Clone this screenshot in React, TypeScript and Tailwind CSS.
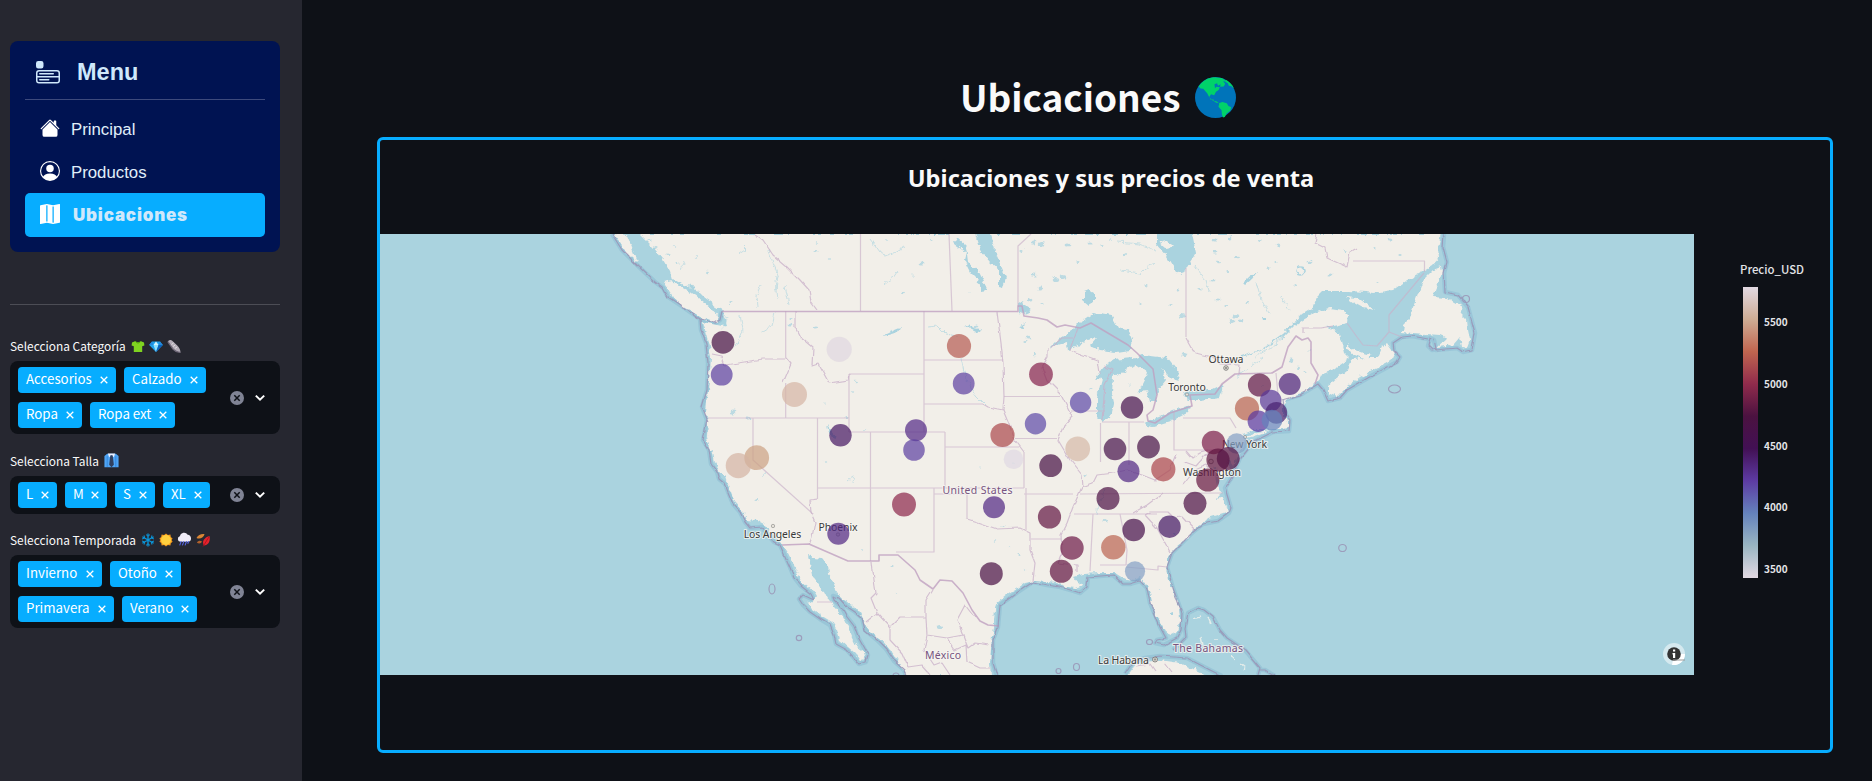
import React from "react";
import { BsHouseFill, BsMapFill, BsMenuAppFill, BsPersonCircle } from "react-icons/bs";

const SANS = "font-['Noto_Sans_CJK_SC',sans-serif]";
const ARIAL = "font-['Liberation_Sans',sans-serif]";

/* ---------- small pictograms ---------- */

const Shirt = () => (
  <svg viewBox="0 0 14 14" className="size-[14px]">
    <path d="M4.500 2 1 3.600.6 6.600l2.200.6V13h8.400V7.200l2.200-.6-.4-3L9.500 2C9 3.800 5 3.800 4.500 2z" fill="#7fd321" />
    <path d="M4.500 2c.5 2.600 4.500 2.600 5 0" fill="none" stroke="#4ea30d" strokeWidth="1" />
  </svg>
);
const Gem = () => (
  <svg viewBox="0 0 14 14" className="size-[14px]">
    <path d="M3 2.500h8L13.800 6 7 13 .2 6z" fill="#1fa2ee" />
    <path d="M3 2.500 4.500 6H.2zM11 2.500 9.500 6h4.300z" fill="#2388dd" />
    <path d="M4.500 6h5L7 13z" fill="#8fe0ff" />
    <path d="M7 2.500 4.500 6h5z" fill="#d5f5ff" />
    <path d="M9.500 6h4.300L7 13z" fill="#0b62bd" />
  </svg>
);
const Shoe = () => (
  <svg viewBox="0 0 14 14" className="size-[14px]">
    <path d="M.8 2.600C2 1 4 .6 5.200 1.800L10 6.200c2 1.800 3.400 4.200 3.500 7.200-2.500-.2-5.500-1.200-7.400-3.400z" fill="#b4adb8" />
    <path d="M.8 2.600 6 10c2 2.400 5 3.300 7.500 3.400" fill="none" stroke="#6f6878" strokeWidth="1.300" />
    <path d="m4.500 5.500 2-1.500M6 7.500 8.200 6M8 9.400 10 8" stroke="#eee" strokeWidth=".8" />
  </svg>
);
const Tie = () => (
  <svg viewBox="0 0 14 14" className="size-[15px]">
    <path d="M3 .8h8l2.600 2V13.200H.4V2.800z" fill="#4fa4f4" />
    <path d="M3 3v10M11 3v10" stroke="#2b7cd3" strokeWidth=".7" />
    <path d="M3.600.5h6.800L9.200 4 7 2.200 4.800 4z" fill="#e8efff" />
    <path d="M6 2.200h2l.3 1.500L9.200 11 7 13.300 4.800 11l.9-7.300z" fill="#30405f" />
  </svg>
);
const Snow = () => (
  <svg viewBox="0 0 14 14" className="size-[14px]">
    <g stroke="#0b96da" strokeWidth="1.300" fill="none">
      <path d="M7 .5v13M1.400 3.700l11.200 6.600M12.600 3.700 1.400 10.300" />
      <path d="m5 1.600 2 1.600 2-1.600M5 12.400l2-1.600 2 1.600M1 6l2.600-1-.5-2.600M13 6l-2.600-1 .5-2.600M1 8l2.600 1-.5 2.600M13 8l-2.600 1 .5 2.600" strokeWidth="1" />
    </g>
  </svg>
);
const Sun = () => (
  <svg viewBox="0 0 14 14" className="size-[14px]">
    <path d="M7 .4 8.900 2l2.500-.4.400 2.400 1.800 1.600L12.600 7l1 1.700-1.800 1.500-.4 2.300-2.500-.4L7 13.600 5.100 12l-2.500.5-.4-2.400L.4 8.500 1.400 7l-1-1.600L2.200 4l.4-2.400L5.100 2z" fill="#f59b1c" />
    <circle cx="7" cy="7" r="5" fill="#ffcf3f" />
  </svg>
);
const Rain = () => (
  <svg viewBox="0 0 14 14" className="size-[15px]">
    <path d="M3 9.200A2.700 2.700 0 0 1 2.600 4 4 4 0 0 1 10 2.600a3.400 3.400 0 0 1 .8 6.600z" fill="#f1edf8" />
    <path d="m4 8.500-1.500 4M6.500 8.500 5 12.500M9 8.500l-1.500 4M11 8.500l-1 2.500" stroke="#5566e8" strokeWidth="1" />
  </svg>
);
const Leaves = () => (
  <svg viewBox="0 0 14 14" className="size-[14px]">
    <path d="M.5 5C2 1.500 5.500.5 8.500 1 8 4.500 4 6.500.5 5z" fill="#d98535" />
    <path d="M.8 9.500C2.400 7.500 4.500 7.500 6 8.600 5 11 2.500 11 .8 9.500z" fill="#b3622c" />
    <path d="M13.500 3c1 4.500-.6 9-5.500 9.600C5.500 9 8 4.500 13.500 3z" fill="#e4232c" />
    <path d="M13 3.800 7 13.600" stroke="#a60f1c" strokeWidth=".8" />
  </svg>
);
const Globe = () => (
  <svg viewBox="0 0 40 40" className="size-[41px]">
    <circle cx="20" cy="20" r="20" fill="#0074ba" />
    <path d="M3.500 9.300C7 4 12 .9 18 .2l8 .7 4 2.400-2.500 1.200 2 2.200-1.500 2.500-3.500.4-1.500 3-2.500 1.800-1.800 3.300-3-.8-1.800 2.400 1.500 3 2.700-.3.800 2 2 1.200 3 .2 2.700-1 4.400 1.200 1.600 2.700 2.700 1.200-1 3.500-3.500 2.600-1.700 3.400-1.800.5-1-2.600-.4-4.400-3-3.500.8-3.200-2.500-1.800-4-1-3.300-3.200-2-4L8 11.400l-2.500-.2z" fill="#00d26a" />
    <path d="M30.500 2.900c3.500 2 6 4.700 7.500 8.200l-2.500-2-2.500-.5-1-2.500-3.500-2z" fill="#00d26a" />
    <path d="m19 7 2.500-1 1 2.500 2.500-1.500-.5 3-3.500-.5-1.500 1.500z" fill="#0074ba" />
  </svg>
);

/* ---------- sidebar ---------- */

const NAV = [
  { label: "Principal", Icon: BsHouseFill, active: false },
  { label: "Productos", Icon: BsPersonCircle, active: false },
  { label: "Ubicaciones", Icon: BsMapFill, active: true },
];

function Menu() {
  return (
    <nav className={`h-[211px] rounded-lg bg-[#001352] px-[15px] text-[#cfe8fb] ${ARIAL}`}>
      <div className="flex h-[59px] items-center border-b border-[#3d4a7c] pt-[5px] pl-[11px]">
        <BsMenuAppFill className="size-6" />
        <span className="ml-[17px] text-[23.500px] leading-none font-bold">Menu</span>
      </div>
      <ul className="pt-[7px]">
        {NAV.map(({ label, Icon, active }) => (
          <li
            key={label}
            className={
              active
                ? "flex h-[44px] items-center rounded-[5px] bg-[#07adff] pl-[15px]"
                : "flex h-[43px] items-center pl-[15px]"
            }
          >
            <Icon className="size-5 -translate-y-px text-white" />
            <span
              className={
                active
                  ? "ml-[13px] translate-y-px font-['Inter',sans-serif] text-[17px] tracking-[0.800px] font-black"
                  : "ml-[11px] translate-y-px text-[16.800px] text-[#e0effa]"
              }
            >
              {label}
            </span>
          </li>
        ))}
      </ul>
    </nav>
  );
}

function Tag({ label, width }: { label: string; width: string }) {
  return (
    <span className={`flex h-[26.500px] items-center justify-between rounded bg-[#07adff] pr-[8px] pl-[8px] text-white ${width}`}>
      <span className="-translate-y-px text-[13.300px] leading-none whitespace-nowrap">{label}</span>
      <svg viewBox="0 0 8 8" className="size-[8px]">
        <path d="M.7.7l6.600 6.600M7.300.7.7 7.300" stroke="white" strokeWidth="1.300" />
      </svg>
    </span>
  );
}

type TagSpec = [string, string];

function MultiSelect({ label, icons, rows, height }: { label: string; icons: React.ReactNode; rows: TagSpec[][]; height: string }) {
  return (
    <div>
      <div className="flex h-[29px] items-center gap-[4px] pb-[2px] text-[11.900px] text-[#fafafa]">
        <span className="mr-[1px] whitespace-nowrap">{label}</span>
        {icons}
      </div>
      <div className={`flex items-center rounded-lg bg-[#0e1117] pl-2 ${height}`}>
        <div className="flex flex-1 flex-col gap-[8.500px]">
          {rows.map((row, i) => (
            <div key={i} className="flex gap-[8px]">
              {row.map(([t, w]) => (
                <Tag key={t} label={t} width={w} />
              ))}
            </div>
          ))}
        </div>
        <svg viewBox="0 0 14 14" className="mr-[10px] size-[14px]">
          <circle cx="7" cy="7" r="7" fill="#808495" />
          <path d="m4.300 4.300 5.400 5.400M9.700 4.300 4.300 9.700" stroke="#0e1117" strokeWidth="1.500" />
        </svg>
        <svg viewBox="0 0 12 12" className="mr-[14px] size-[12px]">
          <path d="m1.800 3.600 4.200 4 4.200-4" fill="none" stroke="white" strokeWidth="2" />
        </svg>
      </div>
    </div>
  );
}

function Sidebar() {
  return (
    <aside className={`h-full w-[302px] shrink-0 bg-[#262730] pt-[41px] pr-[22px] pl-[10px] ${SANS}`}>
      <Menu />
      <hr className="mt-[52px] mb-[27px] border-[#4c4d55]" />
      <MultiSelect
        label="Selecciona Categoría"
        icons={<><Shirt /><Gem /><Shoe /></>}
        height="h-[73px]"
        rows={[[["Accesorios", "w-[98px]"], ["Calzado", "w-[82px]"]], [["Ropa", "w-[64px]"], ["Ropa ext", "w-[85px]"]]]}
      />
      <div className="h-[13px]" />
      <MultiSelect
        label="Selecciona Talla"
        icons={<Tie />}
        height="h-[38px]"
        rows={[[["L", "w-[39px]"], ["M", "w-[42px]"], ["S", "w-[40px]"], ["XL", "w-[47px]"]]]}
      />
      <div className="h-[12px]" />
      <MultiSelect
        label="Selecciona Temporada"
        icons={<><Snow /><Sun /><Rain /><Leaves /></>}
        height="h-[73px]"
        rows={[[["Invierno", "w-[84px]"], ["Otoño", "w-[71px]"]], [["Primavera", "w-[96px]"], ["Verano", "w-[75px]"]]]}
      />
    </aside>
  );
}

/* ---------- map ---------- */

const MAINLAND =
  "M640 234 653 247 662 258 670 272 672 279 683 285 697 290 707 300 718 309 723 313 727 325 722 326 712 324 703 322 705 330 708 342 711 357 710 373 708 390 706 403 705 412 708 422 707 437 710 448 712 452 714 462 720 472 725 477 727 483 731 492 735 502 742 510 747 520 757 521 765 525 770 532 777 537 782 545 787 552 792 562 797 573 803 583 812 590 816 597 813 602 807 604 813 610 822 616 832 622 837 630 840 640 848 647 855 653 860 661 865 658 864 652 857 647 852 637 847 625 842 615 835 607 828 600 823 590 818 583 812 575 810 565 808 555 814 557 822 558 828 565 829 573 833 583 837 592 843 600 853 605 860 613 865 622 870 632 882 640 890 650 898 662 906 676 L991 676 990 663 991 650 992 637 994 628 994 620 995 610 998 602 1007 595 1017 589 1025 583 1035 581 1047 582 1057 583 1067 587 1075 588 1083 585 1077 582 1073 577 1083 574 1100 573 1115 573 1123 578 1133 580 1140 577 1145 583 1150 592 1152 602 1155 613 1160 623 1165 632 1172 635 1178 632 1180 620 1179 608 1175 598 1170 583 1167 573 1166 565 1169 555 1177 547 1187 539 1193 530 1202 525 1208 518 1218 515 1227 512 1225 503 1221 498 1216 499 1222 493 1218 486 1216 475 1213 466 1217 468 1221 480 1227 477 1230 469 1226 458 1230 460 1234 466 1238 457 1242 448 1245 438 1244 434 1253 430 1263 430 1273 429 1283 429 1289 427 1287 418 1283 417 1283 407 1286 400 1295 395 1305 392 1313 386 1320 379 1323 374 1333 370 1343 363 1350 358 1345 353 1343 345 1340 333 1333 330 1326 327 1334 326 1347 323 1348 315 1343 310 1330 308 1317 312 1303 320 1293 327 1286 334 1278 343 1287 330 1295 322 1303 313 1313 307 1317 297 1323 291 1347 291 1367 292 1373 293 1393 290 1403 283 1413 277 1425 270 1433 265 1439 258 1438 247 1441 234Z";

const ISLANDS = [
  "M663 282 672 280 687 288 700 297 713 308 719 315 717 323 703 318 683 307 672 295Z",
  "M615 234 627 235 632 248 637 262 628 255 620 243Z",
  "M1352 359 1367 358 1377 358 1382 347 1387 343 1392 350 1395 357 1387 363 1373 370 1360 377 1347 387 1337 397 1328 393 1328 385 1337 378 1347 370Z",
  "M1347 343 1352 349 1363 353 1371 355 1367 360 1355 355 1347 350Z",
  "M1346 297 1358 298 1375 310 1363 308 1354 303Z",
  "M1441 267 1442 273 1433 297 1447 298 1463 307 1460 313 1467 320 1468 330 1470 340 1467 348 1462 347 1460 337 1453 345 1437 347 1447 338 1440 335 1413 333 1402 332 1403 325 1408 320 1417 297 1423 280 1433 270Z",
  "M1127 676 1135 665 1146 662 1160 660 1180 663 1200 672 1207 676Z",
  "M1246 436 1257 432 1270 430 1258 435 1247 438Z",
];

const LAKES = [
  "M1050 348 1060 338 1073 330 1083 320 1093 313 1112 316 1118 327 1128 329 1132 340 1130 350 1117 352 1100 350 1090 345 1097 337 1087 340 1075 347 1068 351 1067 343Z",
  "M1095 380 1103 367 1113 360 1133 358 1138 362 1130 367 1122 373 1113 377 1112 393 1114 403 1111 417 1102 423 1097 417 1097 397 1102 378 1096 381Z",
  "M1130 360 1143 355 1167 358 1175 368 1180 380 1170 377 1161 368 1166 380 1158 390 1157 402 1150 402 1147 389 1138 394 1145 380 1147 372 1138 366Z",
  "M1144 422 1160 417 1173 410 1191 405 1187 413 1170 422 1153 427 1147 426Z",
  "M1182 395 1190 390 1213 390 1223 385 1220 397 1200 400 1188 400Z",
  "M1157 234 1192 234 1196 253 1188 265 1182 275 1175 270 1167 257 1157 245Z",
  "M975 234 990 234 997 257 1006 277 1003 288 999 287 999 270 990 262 980 250Z",
  "M957 238 966 246 968 262 978 270 983 280 988 291 982 292 978 280 970 272 964 260 966 252 954 243Z",
  "M1084 292 1089 290 1094 293 1094 302 1089 305 1084 301Z",
  "M1018 304 1024 300 1026 307 1031 310 1024 313 1018 312Z",
  "M1018 328 1025 324 1022 329Z",
  "M827 424 832 430 837 436 834 438 829 433Z",
  "M882 336 890 332 900 328 898 332 888 335Z",
  "M1243 283 1250 276 1257 272 1252 279 1245 285Z",
  "M1262 317 1267 317 1267 320 1263 320Z",
  "M1170 613 1173 612 1173 616 1170 616Z",
  "M964 324 972 327 982 331 978 333 970 329Z",
];

const MARITIME = [
  "M612 234 622 250 637 265 655 282 663 288 668 297 680 305 700 319 715 323 720 320 722 311",
  "M700 319 701 330 706 343 708 363 707 390 702 407 707 420 703 440 709 450 711 464 717 472 719 479 725 484 728 492 733 504 740 512 745 522 750 528 762 527 767 534 774 542 780 545 784 554 789 565 794 577 801 586 811 594 814 600 803 595 799 599 803 605 810 612 820 619 830 625 834 635 836 644 847 650 854 658 859 664 866 662 868 655 863 646 858 637 854 626 847 617 842 608 834 600 833 596 839 598 846 606 855 612 862 618 865 630 877 640 886 649 894 661 904 670 906 676",
  "M1444 234 1443 247 1447 262 1444 273 1445 292 1458 295 1468 307 1475 333 1472 350 1463 352 1457 348 1436 350 1434 340 1430 338 1428 346 1432 350 1437 349 M1428 339 1412 336 1402 337 1393 343 1394 351 1400 357 1397 362 1373 375 1347 390 1340 398 1328 401 1323 390 1318 384 1300 395 1283 400 1285 413 1290 420 1289 431 1273 432 1253 442 1240 458 1232 477 1225 488 1231 508 1229 513 1218 521 1203 524 1193 532 1172 553 1167 567 1173 588 1182 613 1181 630 1177 638 1164 645 1155 643 1157 640 1166 638 1160 627 1150 603 1147 588 1140 581 1130 584 1123 584 1113 575 1088 577 1087 587 1080 593 1074 591 1060 587 1047 585 1033 582 1018 592 1000 605 998 627 993 640 993 663 997 676",
  "M1125 674 1133 662 1145 658 1160 656 1187 658 1210 670 1222 676",
  "M1173 650 1186 637 1185 628 1188 613 1198 608 1204 610 1213 617 1220 630 1227 638 1245 650 1260 668 1258 675",
  "M1260 670 1265 670 1275 676",
];

const BORDER = [
  "M722 311.500H1018V306L1022 306 1024 316 1038 318 1047 320 1057 327 1065 325 1080 328 1091 323 1128 345 1137 353 1153 369 1157 395 1153 410 1147 415 1148 421 1155 423 1170 413 1192 406 1190 395 1215 394 1222 384 1235 374 1272 373 1282 367 1288 347 1296 336 1302 340 1308 338 1311 342 1311 363 1318 375 1315 384",
  "M782 545 809 544 848 561H879V555H898L915 570 920 580 933 589 940 580 952 581 963 593 972 610 980 621 988 625 999 626",
];

const STATES_STRAIGHT =
  "M860.500 234V311 M785.700 311V358 M785.700 383V418 M849 374H924 M849 374V432 M708 418H849 M849 432H945 M753 418V460L812 513 M817.500 418V499 M870.500 432V561 M817 488H1024 M945 432V488 M934 488V552H896 M934 494H967V519 M1024 452V488 M1026 488V530 M1031 539H1061 M1024 494H1073 M1074 514H1157 M1080 494 1223 493 M1093 514 1090 571 M1120 514 1127 550 1126 565H1100 M1126 567 1158 570 1158 566 1167 567 M949 234 952 311 M1031 234 1018 246V306 M924 311V432 M924 360H1003 M924 404H983 M1004 396.500H1060 M945 447H1019 M1015 438.500H1057 M1071 411H1105 M1100.500 423V462 M1129 422V465 M1102 422H1144 M1174 412V450H1213 M1183 418H1230L1236 428 M1186 268V337 M1353 261H1424.500V272 M1424 273 1389 315V332L1402 337 M817 602H832 M1276 373 1278 395 M1347 323 1357 337 1363 345 1377 346 1389 332";

const STATES_ROUGH =
  "M755 234 763 240 773 255 787 267 800 280 809 290 811 302 817 310 M712 355 722 357 725 365 738 363 763 359 786 359 M786 358 791 364 783 383 M795 311V327L800 337 813 348 812 365 818 363 829 383 848 380 849 374 M817 499 810 500 811 513 815 522 812 537 809 545 M967 519 977 522 997 529 1020 528 1030 533V550L1035 563 1033 581 M1082 487 1073 507 1067 523 1061 535 1062 553 1058 563 1077 565V572 M1145 515 1157 528 1170 552 M1145 515 1150 512 1168 512 1173 517 1182 516 1195 530 M1133 513 1147 505 1163 493 M1082 487 1093 483 1097 475 1113 473 1127 470 1142 475 1155 480 1170 470 1176 455 M997 312 1001 343 1003 363 1004 397 1003 410 1010 427 1015 440 1024 452 M983 404 988 407 1003 410 M1048 348V357L1042 367 1047 380 1060 393 1072 417 1063 427 1058 440 1070 460 1082 475 1083 487 M1050 348 1062 338 1073 338 M1070 350 1097 360 1099 373 M1070 350 1078 328 M1102 420 1105 385 1112 370 1104 366 M1186 337 1195 353 1213 357 1220 364 1240 365 1239 373 M1317 234 1315 243 1325 248 1327 258 1347 267 1350 252 1357 248 M1303 333 1303 328 1320 328 1333 326 M872 561 874 580 876 593 871 598 877 613 890 627 900 617 926 617 926 600 933 589 M890 627V640L902 653 908 667 M877 613 866 622 M926 617 927 635 947 638 963 635 957 620 965 605 975 618 M947 638 955 650 966 645 967 662 980 668 990 668 M963 635 968 648 975 643 990 645 M927 635 924 650 934 665 942 662 950 674 M908 667 922 665 930 674 M1213 450 1205 456 1196 466 1185 462 M1183 485 1195 470 1207 465 1216 475 M1136 666 1150 664 1155 671 M1165 663 1172 672 M1186 451 1192 458 1200 453 1212 450";

const RIVERS =
  "M928 327 938 326 946 334 958 336M961 358 964 372 969 385 976 397 985 406M740 314 743 330 736 346M775 313 772 325 762 331M848 481 854 476 852 483M740 254 746 250 742 246M758 308 757 295 761 285M775 280 777 300M785 285 789 305M885 284 893 278 897 272M1118 242 1140 244 1155 250M1120 271 1140 274 1155 262M1194 265 1206 280 1209 292M1255 357 1275 345 1284 335M1263 357 1245 371 1236 377M1257 282 1262 300 1270 315M1280 296 1290 310M870 238 880 252 890 256 905 247M768 250 778 275 776 290M1096 515 1100 500 1105 488M722 330 728 318 722 314M660 262 664 258M680 270 684 262M688 284 693 292 700 290";

const SPECKS: [number, number, number][] = [
  [649, 240, 2], [656, 248, 2], [668, 254, 2], [678, 262, 2], [675, 246, 1.500], [697, 257, 1.500], [708, 272, 2.500], [731, 303, 2],
  [790, 325, 3], [816, 328, 3], [791, 318, 2], [733, 412, 3], [748, 418, 3], [816, 252, 2], [830, 259, 1.500], [817, 243, 1.500],
  [903, 293, 2.500], [922, 263, 3], [1033, 242, 3], [1041, 244, 4], [1067, 245, 3], [1090, 243, 3], [1103, 245, 2], [1056, 280, 4],
  [1063, 277, 4], [1040, 288, 3], [1034, 275, 3], [1022, 250, 2], [1078, 262, 2], [1124, 255, 2.500], [1030, 300, 3], [1042, 303, 2],
  [1028, 338, 3], [1025, 342, 2], [1034, 355, 2.500], [1090, 388, 2], [1182, 316, 4], [1184, 354, 4], [1178, 290, 3], [1170, 305, 2],
  [1200, 290, 2], [1212, 281, 3], [1216, 252, 3], [1215, 240, 3], [1218, 262, 2.500], [1230, 238, 3], [1237, 258, 2.500], [1228, 272, 2],
  [1236, 316, 4], [1231, 321, 4], [1241, 321, 3], [1218, 300, 3], [1226, 306, 2], [1248, 302, 2], [1268, 268, 2], [1278, 245, 3],
  [1276, 262, 2], [1260, 240, 2], [1296, 285, 2], [1310, 262, 3], [1330, 275, 3], [1345, 250, 2], [1375, 248, 2], [1390, 240, 3],
  [1400, 255, 2], [1377, 283, 2], [1292, 360, 3], [1298, 368, 2.500], [1305, 372, 2], [1310, 350, 2], [1262, 385, 1.500], [977, 327, 3],
  [824, 403, 1], [856, 382, 2.500], [853, 392, 1.500], [846, 418, 2], [865, 430, 1.500], [757, 500, 2], [764, 474, 1.500], [826, 461, 1.500],
  [862, 550, 1.500], [893, 565, 2], [940, 627, 4], [896, 595, 1.500], [1003, 527, 2], [1010, 547, 1.500], [1020, 555, 2], [1025, 570, 1.500],
  [995, 541, 1.500], [1045, 475, 1.500], [1105, 520, 2], [1085, 475, 2], [1100, 505, 2], [1175, 535, 2], [1160, 590, 1.500], [970, 292, 1],
  [932, 241, 2], [912, 275, 1], [888, 240, 1.500], [1013, 464, 1], [1130, 385, 1], [980, 468, 1], [1110, 240, 1.500], [1145, 285, 2], [1140, 302, 2],
];

const MAP_LABELS: [string, number, number, number, boolean][] = [
  ["Ottawa", 1226, 362.500, 35, false],
  ["Toronto", 1187, 391, 37.500, false],
  ["New York", 1244.500, 448, 45, false],
  ["Washington", 1212, 476, 58, false],
  ["Los Angeles", 772.500, 538, 57.500, false],
  ["Phoenix", 838, 531, 39, false],
  ["La Habana", 1123.500, 663.500, 51, false],
  ["United States", 977.500, 494, 70, true],
  ["México", 943, 659, 36, true],
  ["The Bahamas", 1208, 652, 70, true],
];

const POINTS: [number, number, number, string][] = [
  [723, 342.300, 11.400, "#440e42"], [721.700, 374.700, 10.900, "#5b3e9f"], [839.200, 349.300, 12.600, "#e0d7df"], [794.500, 394.500, 12.500, "#d6b5a4"],
  [840.500, 435.300, 11.200, "#441561"], [959, 346, 12.100, "#b55a50"], [963.700, 383.500, 10.900, "#5d3fa0"], [1041, 374.300, 11.900, "#85214c"],
  [1080.600, 402.500, 10.700, "#5d48a6"], [1132, 407.500, 11.200, "#440f4c"], [916, 430.300, 11, "#512785"], [914, 450, 10.800, "#5b3e9f"],
  [1002.500, 435, 12.100, "#ab474a"], [1035.500, 423.800, 10.700, "#5d48a6"], [1077.700, 448.800, 12.400, "#d6b9a6"], [1115, 449, 11.300, "#440f48"],
  [1148.500, 447, 11.400, "#461045"], [1213.500, 442.500, 11.700, "#7a1c49"], [1259.500, 385, 11.600, "#5e1444"], [1289.700, 384, 11, "#4a1f78"],
  [1247, 408.500, 12.100, "#b8624f"], [1270.700, 400.500, 10.800, "#583799"], [1276.300, 412.800, 10.900, "#47206f"], [1258.300, 421.300, 10.700, "#5936a0"],
  [1272, 420.200, 10.400, "#6584bd"], [1236.700, 443.500, 10.200, "#83a0c5"], [756.700, 457.700, 12.400, "#cca181"], [738.300, 465.700, 12.600, "#d4b3a3"],
  [904, 504.500, 12, "#8b2548"], [838.300, 533.700, 11, "#502581"], [1013.500, 459.300, 9.800, "#e0d9e2"], [1050.700, 465.700, 11.400, "#440e42"],
  [1128.500, 471.200, 11, "#502581"], [1163.300, 469.300, 12.100, "#ab444a"], [1108, 498.500, 11.500, "#4b1043"], [994, 507.300, 11, "#502581"],
  [1049.500, 517, 11.600, "#611440"], [1195, 503.300, 11.500, "#4b1043"], [1207.800, 480, 11.600, "#65163f"], [1218, 460, 11.600, "#5d123f"],
  [1228.200, 458.500, 11.400, "#521041"], [1133.700, 530, 11.300, "#440e48"], [1169.500, 526.700, 11.200, "#421562"], [1072, 548, 11.700, "#6c1846"],
  [1113.300, 547.300, 12.200, "#ba6450"], [1061.300, 571.300, 11.500, "#611440"], [1135, 571.300, 10.100, "#83a0c5"], [991.300, 573.700, 11.500, "#480f43"],
];

const ISLETS: [number, number, number, number][] = [
  [1466, 299, 3.500, 3.500], [1342.500, 548, 3.800, 3.500], [1394.500, 389, 6, 4], [772, 589, 3, 5], [799, 638, 2.700, 2.700],
  [1149.500, 642, 3, 2.500], [1076.500, 667, 3, 3.500], [1058.500, 671, 2.500, 2.500], [896, 676, 3, 3],
];

function PriceMap() {
  return (
    <svg viewBox="380 234 1314 441" className="h-[441px] w-[1314px] shrink-0 bg-[#aad3df]">
      <defs>
        <filter id="rough" x="380" y="220" width="1314" height="470" filterUnits="userSpaceOnUse">
          <feTurbulence type="fractalNoise" baseFrequency="0.16" numOctaves="3" seed="7" />
          <feDisplacementMap in="SourceGraphic" scale="6" xChannelSelector="R" yChannelSelector="G" />
        </filter>
        <filter id="wobble" x="380" y="220" width="1314" height="470" filterUnits="userSpaceOnUse">
          <feTurbulence type="fractalNoise" baseFrequency="0.1" numOctaves="2" seed="3" />
          <feDisplacementMap in="SourceGraphic" scale="4" xChannelSelector="R" yChannelSelector="G" />
        </filter>
      </defs>
      <g fill="none" stroke="#93c1d5" strokeWidth="4.500" strokeLinejoin="round" opacity=".7">
        {MARITIME.map((d) => <path key={d} d={d} />)}
      </g>
      <g filter="url(#rough)">
        <path d={MAINLAND} fill="#f2efe9" />
        {ISLANDS.map((d) => <path key={d} d={d} fill="#f2efe9" />)}
        <g fill="#aad3df">
          {LAKES.map((d) => <path key={d} d={d} />)}
          {SPECKS.map(([x, y, r]) => <ellipse key={`${x}-${y}`} cx={x} cy={y} rx={r * 0.8} ry={r * 0.5} opacity=".75" />)}
        </g>
        <path d="M1159 242 1166 240 1173 247 1166 248Z" fill="#f2efe9" />
        <path d={RIVERS} fill="none" stroke="#aad3df" strokeWidth="1" opacity=".6" />
        <path d="M672 280 687 288 700 297 713 308 722 312 M690 284 700 296 712 304" fill="none" stroke="#aad3df" strokeWidth="2.500" />
        <path d="M1240 357 1262 350 1284 334 1295 322" fill="none" stroke="#aad3df" strokeWidth="1.200" />
        <path d="M1193 619 1201 617M1208 616 1211 624M1201 637 1203 645M1214 640 1218 640M1232 655 1235 661M1240 664 1245 668" fill="none" stroke="#e3ecea" strokeWidth="1.500" />
        <path d="M1284 300a4 4 0 1 0 .1 0" transform="translate(16 -33)" fill="none" stroke="#aad3df" strokeWidth="1.500" />
      </g>
      <g fill="none" stroke="#c9b0c9" strokeLinejoin="round">
        <path d={STATES_STRAIGHT} strokeWidth="1.200" opacity=".65" />
        <path d={STATES_ROUGH} strokeWidth="1.200" opacity=".75" filter="url(#wobble)" />
      </g>
      <g fill="none" stroke="#bfa0c0" strokeWidth="1.600" strokeLinejoin="round" opacity=".8">
        {BORDER.map((d) => <path key={d} d={d} />)}
      </g>
      <g fill="none" stroke="#9a94b6" strokeWidth="1.200" strokeLinejoin="round" opacity=".85">
        <g filter="url(#wobble)">
          {MARITIME.map((d) => <path key={d} d={d} />)}
        </g>
        {ISLETS.map(([x, y, rx, ry]) => <ellipse key={`${x}`} cx={x} cy={y} rx={rx} ry={ry} />)}
      </g>
      <g fill="#e6e2da" stroke="#6f6f6f" strokeWidth=".8">
        <circle cx="1226" cy="368" r="2.300" />
        <circle cx="1226" cy="368" r=".7" />
        <circle cx="1211" cy="461.500" r="2.300" />
        <circle cx="1155" cy="659.500" r="2.500" />
        <circle cx="1155" cy="659.500" r=".8" />
        <g strokeOpacity=".6">
          <circle cx="1187" cy="394.500" r="1.600" />
          <circle cx="1245" cy="437" r="1.600" />
          <circle cx="773" cy="526" r="1.700" />
          <circle cx="838" cy="534.500" r="1.700" />
        </g>
      </g>
      <g
        className="font-['Noto_Sans',sans-serif] text-[10.500px]"
        textAnchor="middle"
        stroke="#f7f5f2"
        strokeOpacity=".75"
        strokeWidth="2.200"
        strokeLinejoin="round"
        paintOrder="stroke"
      >
        {MAP_LABELS.map(([t, x, y, w, country]) => (
          <text key={t} x={x} y={y} textLength={w} fill={country ? "#775480" : "#3a3a3a"}>
            {t}
          </text>
        ))}
      </g>
      <g fillOpacity=".7">
        {POINTS.map(([x, y, r, c]) => <circle key={`${x}-${y}`} cx={x} cy={y} r={r} fill={c} />)}
      </g>
      <circle cx="1674" cy="654" r="11" fill="#fff" fillOpacity=".5" />
      <path d="M1674 654h11a11 11 0 0 1-13 10.900z" fill="#fff" />
      <circle cx="1674" cy="654" r="6.800" fill="#333" />
      <path d="M1673 649.500h2.200v2h-2.200zM1672.500 653h2.700v5h-2.200v-3.500h-.5z" fill="#fff" />
      <path d="M1673 660h12" stroke="#999" strokeWidth="1" />
    </svg>
  );
}

const TICKS = ["5500", "5000", "4500", "4000", "3500"];

function ColorBar() {
  return (
    <div className={`flex flex-col pt-[28px] pl-[46px] text-[#e3e4e8] ${SANS}`}>
      <div className="h-[25px] text-[11.400px] leading-[14px] font-medium">Precio_USD</div>
      <div className="flex pl-[3px]">
        <div className="h-[291px] w-[15px] bg-[linear-gradient(to_bottom,#e2d9e2_0%,#ceac94_11.100%,#c0654f_22.200%,#902b4c_33.300%,#4b1240_44.400%,#421054_55.500%,#5d3ba3_66.600%,#6482bc_77.700%,#99b5c2_88.800%,#e2d9e2_100%)]" />
        <div className="flex flex-col pt-[28px] pl-[6px] text-[10px] leading-[14px] font-bold">
          {TICKS.map((t) => (
            <span key={t} className="h-[61.800px]">{t}</span>
          ))}
        </div>
      </div>
    </div>
  );
}

export default function App() {
  return (
    <div className="flex h-[781px] w-[1872px] overflow-hidden bg-[#0e1117]">
      <Sidebar />
      <main className="flex flex-1 flex-col pt-[59px] pr-[39px] pl-[75px]">
        <h1 className={`flex h-[78px] items-center pl-[583px] text-[36.900px] leading-none font-bold text-[#fafafa] ${SANS}`}>
          <span className="w-[220px] -translate-y-[2px]">Ubicaciones</span>
          <span className="ml-[15px] -translate-y-px"><Globe /></span>
        </h1>
        <section className="h-[616px] rounded-md border-[3px] border-[#07adff]">
          <h2 className="flex h-[94px] items-center justify-center pl-[12px] font-['Noto_Sans',sans-serif] text-[23.650px] leading-none font-bold text-[#fafafa]">
            <span className="-translate-y-[8px]">Ubicaciones y sus precios de venta</span>
          </h2>
          <div className="flex">
            <PriceMap />
            <ColorBar />
          </div>
        </section>
      </main>
    </div>
  );
}
